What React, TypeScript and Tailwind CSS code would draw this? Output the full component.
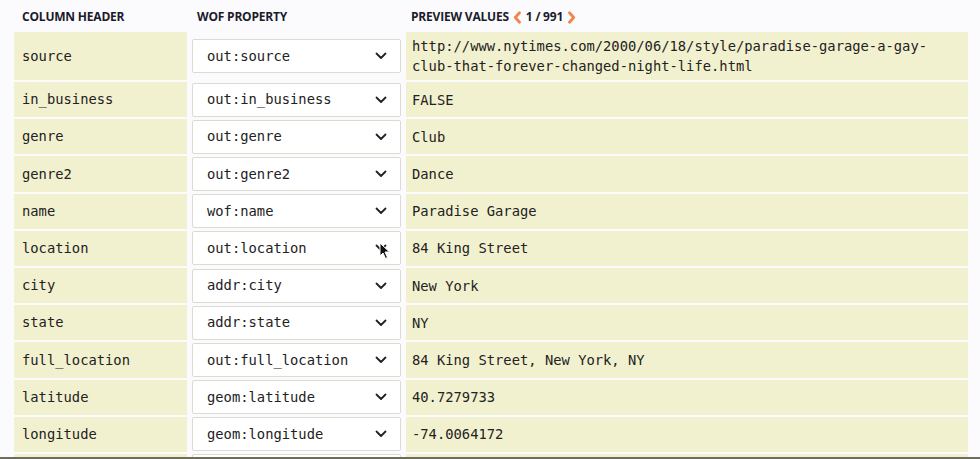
const rows = [
  { col: 'source', prop: 'out:source', value: 'http://www.nytimes.com/2000/06/18/style/paradise-garage-a-gay-club-that-forever-changed-night-life.html' },
  { col: 'in_business', prop: 'out:in_business', value: 'FALSE' },
  { col: 'genre', prop: 'out:genre', value: 'Club' },
  { col: 'genre2', prop: 'out:genre2', value: 'Dance' },
  { col: 'name', prop: 'wof:name', value: 'Paradise Garage' },
  { col: 'location', prop: 'out:location', value: '84 King Street' },
  { col: 'city', prop: 'addr:city', value: 'New York' },
  { col: 'state', prop: 'addr:state', value: 'NY' },
  { col: 'full_location', prop: 'out:full_location', value: '84 King Street, New York, NY' },
  { col: 'latitude', prop: 'geom:latitude', value: '40.7279733' },
  { col: 'longitude', prop: 'geom:longitude', value: '-74.0064172' },
  { col: '', prop: '', value: '' },
];

function Chevron() {
  return (
    <svg width="12" height="8" viewBox="0 0 12 8" className="shrink-0">
      <path d="M1.5 1.5 L6 6 L10.5 1.5" fill="none" stroke="#222" strokeWidth="1.8" strokeLinecap="round" strokeLinejoin="round" />
    </svg>
  );
}

function Arrow({ dir }: { dir: 'left' | 'right' }) {
  return (
    <svg width="9" height="13" viewBox="0 0 9 13" className="inline-block">
      <path
        d={dir === 'left' ? 'M6.5 1.8 L2.3 6.5 L6.5 11.2' : 'M2.5 1.8 L6.7 6.5 L2.5 11.2'}
        fill="none"
        stroke="#f2854f"
        strokeWidth="2.8"
        strokeLinecap="round"
        strokeLinejoin="round"
      />
    </svg>
  );
}

function Cursor() {
  return (
    <svg width="12" height="18" viewBox="0 0 12 18" className="absolute left-[379px] top-[242px]">
      <path d="M1 1 L1 14 L4 11 L6.5 16.5 L8.5 15.5 L6 10 L10.5 10 Z" fill="#111" stroke="#fff" strokeWidth="1" strokeLinejoin="round" />
    </svg>
  );
}

export default function App() {
  const mono = { fontFamily: '"DejaVu Sans Mono", "Liberation Mono", monospace' };
  const head = { fontFamily: '"Open Sans", sans-serif' };
  return (
    <div className="relative h-[459px] w-[980px] overflow-hidden bg-[#fbfbfd] border-b-2 border-[#6e6d5c]">
      <div className="grid grid-cols-[173px_209px_562px] gap-x-[5px] gap-y-[2px] pl-[14px]">
        <div className="flex h-[30px] items-center pl-[8px] pt-[4px] text-[12px] font-bold tracking-[-0.2px] text-[#1b1a2b]" style={head}>
          COLUMN HEADER
        </div>
        <div className="flex h-[30px] items-center pl-[5px] pt-[4px] text-[12px] font-bold tracking-[-0.2px] text-[#1b1a2b]" style={head}>
          WOF PROPERTY
        </div>
        <div className="flex h-[30px] items-center gap-[4px] pl-[5px] pt-[4px] text-[12px] font-bold tracking-[-0.2px] text-[#1b1a2b]" style={head}>
          <span>PREVIEW VALUES</span>
          <Arrow dir="left" />
          <span>1 / 991</span>
          <Arrow dir="right" />
        </div>

        {rows.map((r, i) => (
          <div key={i} className="contents">
            <div
              className={`flex items-center bg-[#f2f1cf] pl-[8px] text-[13.8px] text-[#222] ${i === 0 ? 'h-[48px]' : 'h-[35.2px]'}`}
              style={mono}
            >
              {r.col}
            </div>
            <div className={`flex items-center ${i === 0 ? 'h-[48px]' : 'h-[35.2px]'}`}>
              <div
                className="flex h-[34px] w-full items-center justify-between rounded-[2px] border border-[#dcdbd0] bg-white pl-[14px] pr-[13px] text-[13.8px] text-[#222]"
                style={mono}
              >
                <span>{r.prop}</span>
                {r.prop && <Chevron />}
              </div>
            </div>
            <div
              className={`flex items-center bg-[#f2f1cf] pl-[6px] pr-[30px] text-[13.8px] leading-[20px] text-[#222] ${i === 0 ? 'h-[48px]' : 'h-[35.2px]'}`}
              style={mono}
            >
              <span>{r.value}</span>
            </div>
          </div>
        ))}
      </div>
      <Cursor />
    </div>
  );
}
